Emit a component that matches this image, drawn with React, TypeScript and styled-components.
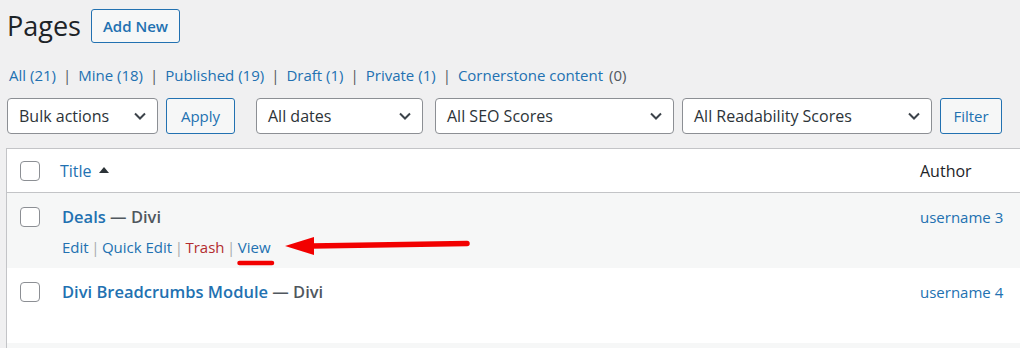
import styled, { createGlobalStyle } from "styled-components"

const GlobalStyle = createGlobalStyle`
  html, body {
    margin: 0;
    padding: 0;
    background-color: #f0f0f1;
    overflow: hidden;
  }
  body {
    font-family: "Open Sans", "Liberation Sans", sans-serif;
    color: #1d2327;
  }
`

const Page = styled.div`
  position: relative;
  width: 1040px;
  padding-left: 7px;
`

const TitleRow = styled.div`
  display: flex;
  align-items: center;
  gap: 10px;
  padding-top: 9px;
  height: 34px;
`

const PageTitle = styled.h1`
  margin: 0;
  font-size: 27px;
  font-weight: 400;
  line-height: 34px;
  color: #1d2327;
`

const OutlineButton = styled.div<{ $bold?: boolean }>`
  display: flex;
  align-items: center;
  justify-content: center;
  box-sizing: border-box;
  height: ${(p) => (p.$bold ? 34 : 36)}px;
  padding: 0 11px;
  border: 1px solid #2271b1;
  border-radius: 3px;
  background-color: #f6f7f7;
  color: #2271b1;
  font-size: 15px;
  font-weight: ${(p) => (p.$bold ? 600 : 400)};
`

const StatusLinks = styled.div`
  display: flex;
  align-items: center;
  margin-top: 20px;
  padding-left: 2px;
  height: 24px;
  font-size: 15px;
  color: #50575e;
`

const StatusLink = styled.span`
  color: #2271b1;
`

const Count = styled.span`
  color: #50575e;
  margin-left: 6px;
`

const Sep = styled.span`
  color: #50575e;
  margin: 0 7px;
`

const TableNav = styled.div`
  display: flex;
  align-items: center;
  margin-top: 11px;
  height: 36px;
`

const SelectBox = styled.div<{ $w: number; $gap: number }>`
  display: flex;
  align-items: center;
  justify-content: space-between;
  box-sizing: border-box;
  width: ${(p) => p.$w}px;
  height: 36px;
  margin-right: ${(p) => p.$gap}px;
  padding: 0 11px 0 11px;
  border: 1px solid #8c8f94;
  border-radius: 4px;
  background-color: #fff;
  color: #2c3338;
  font-size: 16px;
`

const Chevron = () => (
  <svg width="12" height="8" viewBox="0 0 12 8">
    <polyline points="1,1.5 6,6.5 11,1.5" fill="none" stroke="#3c434a" strokeWidth="2" />
  </svg>
)

const Table = styled.div`
  margin-top: 14px;
  margin-left: -1px;
  border: 1px solid #c3c4c7;
  border-right: none;
  background-color: #fff;
`

const Row = styled.div<{ $alt?: boolean; $head?: boolean }>`
  display: grid;
  grid-template-columns: 53px 860px 1fr;
  height: ${(p) => (p.$head ? 43 : 75)}px;
  background-color: ${(p) => (p.$alt ? "#f6f7f7" : "#fff")};
  border-bottom: ${(p) => (p.$head ? "1px solid #c3c4c7" : "none")};
  align-items: ${(p) => (p.$head ? "center" : "start")};
`

const StubRow = styled.div`
  height: 10px;
  background-color: #f6f7f7;
`

const CheckCell = styled.div<{ $top?: number }>`
  padding-left: 13px;
  padding-top: ${(p) => p.$top ?? 0}px;
`

const Checkbox = styled.div`
  width: 20px;
  height: 20px;
  box-sizing: border-box;
  border: 1px solid #8c8f94;
  border-radius: 4px;
  background-color: #fff;
`

const HeadLabel = styled.div`
  display: flex;
  align-items: center;
  font-size: 16px;
  color: #2271b1;
`

const AuthorHead = styled.div`
  font-size: 16px;
  color: #1d2327;
`

const SortUp = styled.span`
  width: 0;
  height: 0;
  margin-left: 7px;
  margin-bottom: 2px;
  border-left: 5px solid transparent;
  border-right: 5px solid transparent;
  border-bottom: 6px solid #2c3338;
`

const TitleCell = styled.div`
  padding: 12px 0 0 2px;
`

const PostTitle = styled.div`
  line-height: 24px;
  font-size: 16.5px;
  font-weight: 600;
  color: #2271b1;
`

const PostState = styled.span`
  color: #50575e;
`

const RowActions = styled.div`
  margin-top: 6px;
  line-height: 24px;
  font-size: 15px;
  color: #a7aaad;
`

const Action = styled.span<{ $danger?: boolean }>`
  color: ${(p) => (p.$danger ? "#b32d2e" : "#2271b1")};
`

const ActionSep = styled.span`
  margin: 0 2.5px;
`

const AuthorCell = styled.div`
  padding-top: 12px;
  line-height: 24px;
  font-size: 15px;
  color: #2271b1;
`

const Annotation = styled.svg`
  position: absolute;
  left: 230px;
  top: 232px;
  pointer-events: none;
`

const statuses = [
  { label: "All", count: "(21)", linked: true },
  { label: "Mine", count: "(18)", linked: true },
  { label: "Published", count: "(19)", linked: true },
  { label: "Draft", count: "(1)", linked: true },
  { label: "Private", count: "(1)", linked: true },
  { label: "Cornerstone content", count: "(0)", linked: false },
]

export default function App() {
  return (
    <Page>
      <GlobalStyle />
      <TitleRow>
        <PageTitle>Pages</PageTitle>
        <OutlineButton $bold>Add New</OutlineButton>
      </TitleRow>

      <StatusLinks>
        {statuses.map((s, i) => (
          <span key={s.label}>
            {i > 0 && <Sep>|</Sep>}
            <StatusLink>
              {s.label}
              {s.linked ? <> {s.count}</> : null}
            </StatusLink>
            {!s.linked && <Count>{s.count}</Count>}
          </span>
        ))}
      </StatusLinks>

      <TableNav>
        <SelectBox $w={151} $gap={8}>
          Bulk actions
          <Chevron />
        </SelectBox>
        <OutlineButton style={{ width: 69, marginRight: 21 }}>Apply</OutlineButton>
        <SelectBox $w={167} $gap={12}>
          All dates
          <Chevron />
        </SelectBox>
        <SelectBox $w={239} $gap={8}>
          All SEO Scores
          <Chevron />
        </SelectBox>
        <SelectBox $w={250} $gap={8}>
          All Readability Scores
          <Chevron />
        </SelectBox>
        <OutlineButton style={{ width: 62 }}>Filter</OutlineButton>
      </TableNav>

      <Table>
        <Row $head>
          <CheckCell>
            <Checkbox />
          </CheckCell>
          <HeadLabel>
            Title
            <SortUp />
          </HeadLabel>
          <AuthorHead>Author</AuthorHead>
        </Row>

        <Row $alt>
          <CheckCell $top={14}>
            <Checkbox />
          </CheckCell>
          <TitleCell>
            <PostTitle>
              Deals <PostState>— Divi</PostState>
            </PostTitle>
            <RowActions>
              <Action>Edit</Action>
              <ActionSep>|</ActionSep>
              <Action>Quick Edit</Action>
              <ActionSep>|</ActionSep>
              <Action $danger>Trash</Action>
              <ActionSep>|</ActionSep>
              <Action>View</Action>
            </RowActions>
          </TitleCell>
          <AuthorCell>username 3</AuthorCell>
        </Row>

        <Row>
          <CheckCell $top={14}>
            <Checkbox />
          </CheckCell>
          <TitleCell>
            <PostTitle>
              Divi Breadcrumbs Module <PostState>— Divi</PostState>
            </PostTitle>
          </TitleCell>
          <AuthorCell>username 4</AuthorCell>
        </Row>
        <StubRow />
      </Table>

      <Annotation width="245" height="36" viewBox="0 0 245 36">
        <line x1="82" y1="14" x2="237" y2="11.5" stroke="#f20000" strokeWidth="5.5" strokeLinecap="round" />
        <polygon points="55,14 84,5 84,23" fill="#f20000" />
        <line x1="9.5" y1="31" x2="42" y2="31" stroke="#f20000" strokeWidth="4.5" strokeLinecap="round" />
      </Annotation>
    </Page>
  )
}
